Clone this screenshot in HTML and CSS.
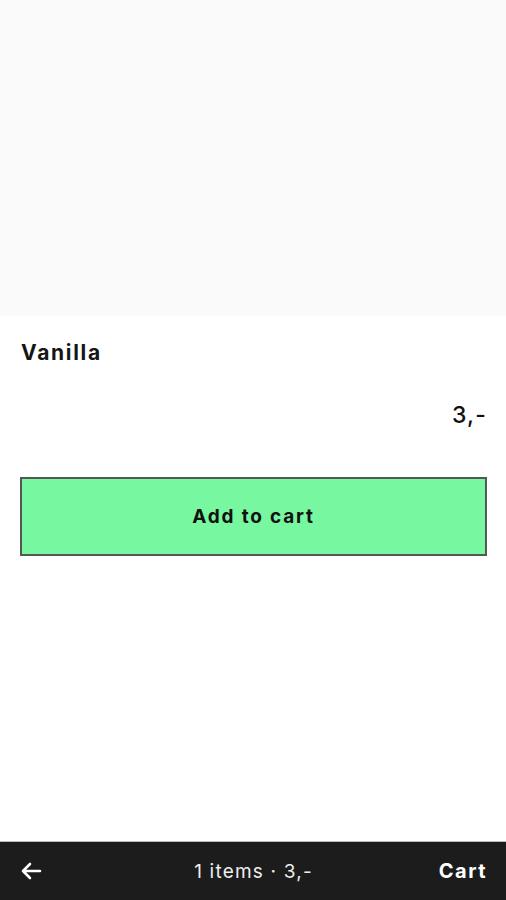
FILE: index.html
```html
<!DOCTYPE html>
<html>
<head>
<meta charset="utf-8">
<link rel="stylesheet" href="styles.css">
</head>
<body>
<div class="page">
  <div class="hero"></div>
  <div class="content">
    <h1 class="title">Vanilla</h1>
    <div class="price">3,-</div>
    <button class="add">Add to cart</button>
  </div>
  <div class="spacer"></div>
  <nav class="bar">
    <span class="back"><svg width="22" height="18" viewBox="0 0 22 18"><path d="M20 9H3M10 2L3 9l7 7" fill="none" stroke="#fff" stroke-width="2.6" stroke-linecap="round" stroke-linejoin="round"/></svg></span>
    <span class="summary">1 items · 3,-</span>
    <span class="cart">Cart</span>
  </nav>
</div>
</body>
</html>
```

FILE: styles.css
```css
* { box-sizing: border-box; }
html, body { margin: 0; padding: 0; }
body {
  font-family: Inter, "Liberation Sans", Arial, sans-serif;
  background: #fff;
  color: #111;
}
.page {
  height: 900px;
  display: flex;
  flex-direction: column;
}
.hero {
  height: 316px;
  background: #fafafa;
}
.content {
  padding: 0 19px 0 20px;
  display: flex;
  flex-direction: column;
}
.title {
  margin: 24px 0 0 1px;
  font-size: 21px;
  font-weight: 700;
  letter-spacing: 1.7px;
  line-height: 26px;
  color: #151515;
}
.price {
  margin-top: 35px;
  text-align: right;
  font-size: 23px;
  font-weight: 500;
  line-height: 28px;
  letter-spacing: 1.2px;
  padding-right: 0;
}
.add {
  margin-top: 48px;
  height: 79px;
  width: 100%;
  background: #77f7a0;
  border: 2px solid #505a52;
  font-family: inherit;
  font-size: 19px;
  font-weight: 700;
  letter-spacing: 1.8px;
  color: #111;
  padding: 0;
}
.spacer { flex: 1; }
.bar {
  height: 59px;
  background: #1c1c1c;
  border-top: 1px solid #bbb;
  display: flex;
  align-items: center;
  justify-content: space-between;
  padding: 0 20px 0 20px;
  color: #fff;
}
.back { width: 60px; display: flex; align-items: center; }
.summary {
  font-size: 19px;
  letter-spacing: 1.2px;
  color: #eee;
}
.cart {
  width: 60px;
  text-align: right;
  font-size: 20px;
  font-weight: 700;
  letter-spacing: 1.5px;
  margin-right: -1px;
}
```
